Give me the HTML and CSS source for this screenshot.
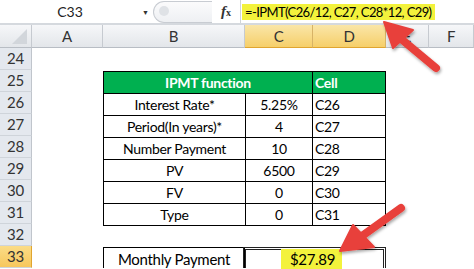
FILE: index.html
```html
<!DOCTYPE html>
<html lang="en">
<head>
    <meta charset="UTF-8">
    <title>IPMT function</title>
    <link rel="stylesheet" href="styles.css">
</head>
<body>

    <!-- Formula bar -->
    <div class="formula-bar">
        <div class="name-box">C33<span class="drop">&#9660;</span></div>
        <div class="grip"></div>
        <div class="fx"><i>f</i><small>x</small></div>
        <div class="formula"><span class="mark">=-IPMT(C26/12, C27, C28*12, C29)</span></div>
    </div>

    <!-- Sheet -->
    <div class="sheet">
        <div class="corner"><span></span></div>
        <div class="col-head">A</div>
        <div class="col-head">B</div>
        <div class="col-head sel">C</div>
        <div class="col-head sel">D</div>
        <div class="col-head">E</div>
        <div class="col-head last">F</div>

        <div class="row-head">24</div>
        <div class="row-head">25</div>
        <div class="row-head">26</div>
        <div class="row-head">27</div>
        <div class="row-head">28</div>
        <div class="row-head">29</div>
        <div class="row-head">30</div>
        <div class="row-head">31</div>
        <div class="row-head">32</div>
        <div class="row-head sel">33</div>

        <table class="ipmt">
            <tr class="head">
                <td colspan="2">IPMT function</td>
                <td class="ref">Cell</td>
            </tr>
            <tr><td class="label">Interest Rate*</td><td>5.25%</td><td class="ref">C26</td></tr>
            <tr><td class="label">Period(In years)*</td><td>4</td><td class="ref">C27</td></tr>
            <tr><td class="label">Number Payment</td><td>10</td><td class="ref">C28</td></tr>
            <tr><td class="label">PV</td><td>6500</td><td class="ref">C29</td></tr>
            <tr><td class="label">FV</td><td>0</td><td class="ref">C30</td></tr>
            <tr><td class="label">Type</td><td>0</td><td class="ref">C31</td></tr>
        </table>

        <div class="result-label">Monthly Payment</div>
        <div class="result-value"><span class="mark">$27.89</span></div>
    </div>

    <!-- Arrows -->
    <svg class="arrows" width="474" height="269" viewBox="0 0 474 269">
        <defs>
            <filter id="shade" x="-20%" y="-20%" width="140%" height="140%">
                <feDropShadow dx="1" dy="2" stdDeviation="1.5" flood-color="#000" flood-opacity="0.35"/>
            </filter>
        </defs>
        <g fill="#e8403b" stroke="#e8403b" stroke-linejoin="round" stroke-linecap="round" filter="url(#shade)">
            <line x1="436" y1="68" x2="400" y2="38" stroke-width="8"/>
            <polygon points="384,22 413,30 393,48" stroke-width="2"/>
            <line x1="401" y1="208" x2="362" y2="236" stroke-width="8"/>
            <polygon points="340,251 353,225 374,247" stroke-width="2"/>
        </g>
    </svg>

</body>
</html>
```

FILE: styles.css
```css
body {
    margin: 0;
    width: 474px;
    height: 269px;
    overflow: hidden;
    position: relative;
    background: #fff;
    font-family: Lato, 'Open Sans', sans-serif;
    color: #000;
}

/* Formula bar */
.formula-bar {
    display: flex;
    align-items: center;
    height: 23px;
    background: #fff;
    border-bottom: 2px solid #d5d9de;
    white-space: nowrap;
}

.name-box {
    width: 140px;
    padding-right: 10px;
    position: relative;
    text-align: center;
    font-size: 14px;
    color: #222;
}

.drop {
    position: absolute;
    right: 1px;
    top: 5px;
    font-size: 7px;
    color: #333;
}

.grip {
    width: 58px;
    height: 20px;
    margin-left: 3px;
    border: 1px solid #c8ccd2;
    border-right: none;
    border-radius: 11px 0 0 11px;
    background: linear-gradient(#fbfbfc, #eef0f3);
    position: relative;
}

.grip::before {
    content: "";
    position: absolute;
    left: 5px;
    top: 4px;
    width: 10px;
    height: 10px;
    border-radius: 50%;
    background: #dfe2e6;
}

.fx {
    width: 28px;
    font-family: 'Liberation Serif', serif;
    font-size: 15px;
    font-weight: bold;
    color: #333;
    border-right: 1px solid #d0d4d9;
    height: 23px;
    line-height: 23px;
    text-align: center;
}

.fx small {
    font-size: 10px;
}

.formula {
    flex: 1;
    padding-left: 1px;
    font-size: 13px;
    letter-spacing: -0.6px;
    overflow: hidden;
}

.mark {
    background: #f3f23c;
    padding: 2px 3px 3px;
}

/* Sheet */
.sheet {
    display: grid;
    grid-template-columns: 32px 71px 142px 68px 73px 43px 45px;
    grid-template-rows: 23px repeat(10, 22px);
    font-size: 14px;
    letter-spacing: -0.3px;
}

.corner,
.col-head {
    background: linear-gradient(#f6f7f9, #e3e6ea);
    border-right: 1px solid #c6cad0;
    border-bottom: 1px solid #b8bdc4;
    text-align: center;
    line-height: 22px;
    color: #333;
    font-size: 15px;
}

.corner {
    position: relative;
}

.corner span {
    position: absolute;
    right: 4px;
    bottom: 3px;
    width: 0;
    height: 0;
    border-left: 15px solid transparent;
    border-bottom: 15px solid #d2d6db;
}

.col-head.sel {
    background: linear-gradient(#fae6a8, #f6cf6a);
    border-right-color: #d7b366;
    border-bottom-color: #e0a530;
}

.col-head.last {
    grid-column: 7 / 8;
}

.row-head {
    grid-column: 1;
    background: #e4e8ee;
    border-right: 1px solid #c0c5cc;
    border-bottom: 1px solid #cfd4da;
    box-sizing: border-box;
    text-align: center;
    line-height: 21px;
    color: #333;
    font-size: 15px;
}

.row-head.sel {
    background: linear-gradient(#fbdc87, #f7c75c);
    border-right-color: #e0a530;
}

/* IPMT table */
.ipmt {
    grid-column: 3 / 6;
    grid-row: 3 / 10;
    border-collapse: collapse;
    margin-top: 1px;
    height: 154px;
}

.ipmt td {
    border: 1px solid #000;
    padding: 0;
    height: 21px;
    text-align: center;
    line-height: 20px;
}

.ipmt td.label {
    width: 141px;
}

.ipmt td.ref {
    text-align: left;
    padding-left: 2px;
    width: 70px;
}

.ipmt .head td {
    background: #00b050;
    color: #fff;
    font-weight: bold;
}

/* Result row */
.result-label {
    grid-column: 3;
    grid-row: 11;
    margin-top: 1px;
    border: 1px solid #000;
    border-bottom: none;
    text-align: center;
    line-height: 22px;
    font-size: 15px;
}

.result-value {
    grid-column: 4 / 6;
    grid-row: 11;
    margin: 1px 0 0 -2px;
    border: 3px double #222;
    border-bottom: none;
    text-align: center;
    line-height: 19px;
    padding-right: 6px;
    font-size: 15px;
}

.result-value .mark {
    padding: 1px 7px 2px 9px;
}

/* Arrows drawn over the sheet */
.arrows {
    position: absolute;
    left: 0;
    top: 0;
    pointer-events: none;
}
```
